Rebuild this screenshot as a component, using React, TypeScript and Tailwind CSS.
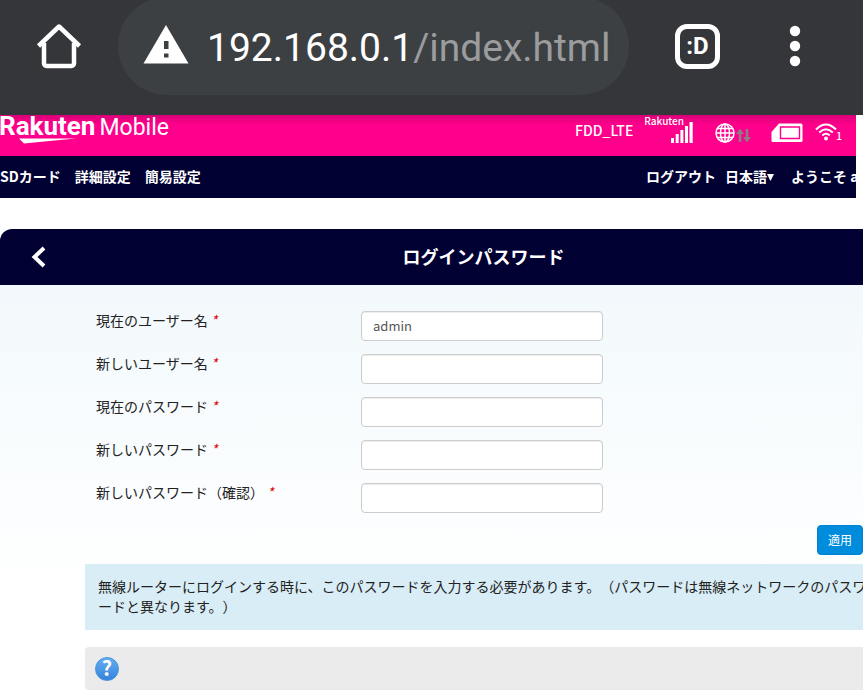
import { useState } from "react";

interface Field {
  id: string;
  label: string;
  type: "text" | "password";
}

const FIELDS: Field[] = [
  { id: "current-user", label: "現在のユーザー名", type: "text" },
  { id: "new-user", label: "新しいユーザー名", type: "text" },
  { id: "current-password", label: "現在のパスワード", type: "password" },
  { id: "new-password", label: "新しいパスワード", type: "password" },
  { id: "confirm-password", label: "新しいパスワード（確認）", type: "password" },
];

const NAV_ITEMS = ["SDカード", "詳細設定", "簡易設定"];

function HomeIcon() {
  return (
    <svg width="46" height="46" viewBox="0 0 46 46" fill="none" stroke="#fff" strokeWidth="4.500">
      <path d="M8 20v20.500a2.500 2.500 0 0 0 2.500 2.500h25a2.500 2.500 0 0 0 2.500-2.500V20" />
      <path d="M2.500 23 23 3.500 43.500 23" strokeLinejoin="round" />
    </svg>
  );
}

function WarningIcon() {
  return (
    <svg width="46" height="40" viewBox="0 0 46 40" className="mb-1 shrink-0">
      <path d="M23 1 45.500 39.500H.5Z" fill="#fff" />
      <path d="M21 17h4.500v8H21zM21 29.500h4.500v4H21z" fill="#3c4043" />
    </svg>
  );
}

function BrowserBar() {
  return (
    <div className="relative z-10 flex h-[115px] items-start overflow-hidden bg-[#35363a]">
      <button aria-label="Home" className="ml-9 mt-[23px] shrink-0">
        <HomeIcon />
      </button>
      <div className="-mt-[3px] ml-9 flex h-[98px] min-w-0 max-w-[511px] flex-1 items-center rounded-full bg-[#3c4043] pl-[25px] pr-3">
        <WarningIcon />
        <div className="ml-[18px] mt-1 min-w-0 flex-1 whitespace-nowrap font-[Roboto,sans-serif] text-[39px] leading-[48px] text-white">
          192.168.0.1<span className="text-[#9a9c9e]">/index.html</span>
        </div>
      </div>
      <button
        aria-label="Tabs"
        className="ml-[46px] mt-6 flex size-[45px] shrink-0 items-center justify-center rounded-[12px] border-[5px] border-white pb-0.5"
      >
        <span className="font-['Liberation_Sans_Narrow',Roboto,sans-serif] text-2xl font-bold leading-6 text-white">
          :D
        </span>
      </button>
      <button aria-label="Menu" className="ml-[69px] mt-[25px] shrink-0">
        <svg width="12" height="42" viewBox="0 0 12 42" fill="#fff">
          <circle cx="6" cy="6" r="5.200" />
          <circle cx="6" cy="21" r="5.200" />
          <circle cx="6" cy="36" r="5.200" />
        </svg>
      </button>
    </div>
  );
}

function Logo() {
  return (
    <div className="relative -mt-0.5 h-8 whitespace-nowrap font-[Roboto,sans-serif] leading-[26px]">
      <span className="-ml-px text-[26px] font-bold">Rakuten</span>
      <span className="ml-1 text-[23px]">Mobile</span>
      <svg width="58" height="6" viewBox="0 0 58 6" className="absolute left-[19px] top-[25px]">
        <path d="M0 .5H57Q30 3 5 5.500Z" fill="#fff" />
      </svg>
    </div>
  );
}

function SignalIcon() {
  return (
    <svg width="22" height="21" viewBox="0 0 22 21" fill="#fff">
      <path d="M0 16h3v5H0zM4.700 12h3v9h-3zM9.400 8h3v13h-3zM14 4h3v17h-3zM18.500 0h3.200v21h-3.200z" />
    </svg>
  );
}

function GlobeIcon() {
  return (
    <svg width="36" height="21" viewBox="0 0 36 21" fill="none" stroke="#fff" strokeWidth="1.500">
      <circle cx="10" cy="10" r="9" />
      <ellipse cx="10" cy="10" rx="4.500" ry="9" />
      <path d="M10 1v18M1 10h18M2.500 5.500h15M2.500 14.500h15" />
      <path d="M25 19V8M32 6v11" stroke="#8a7d84" strokeWidth="2.500" />
      <path d="m21 11 4-5.500 4 5.500ZM28 14l4 5.500 4-5.500Z" fill="#8a7d84" stroke="none" />
    </svg>
  );
}

function SimIcon() {
  return (
    <svg width="32" height="20" viewBox="0 0 32 20">
      <path d="M8 .5h22q1.500 0 1.500 1.500v15.500q0 1.500-1.500 1.500H2Q.5 19 .5 17.500V9Z" fill="#fff" />
      <path d="M9.500 4h19v11.500h-19z" fill="#fff" stroke="#ff008c" strokeWidth="1.400" />
    </svg>
  );
}

function WifiIcon() {
  return (
    <svg width="22" height="18" viewBox="0 0 22 18" fill="none" stroke="#fff" strokeWidth="2">
      <path d="M1 6.500Q11-3.500 21 6.500M4.200 9.500q6.800-6.500 13.600 0M7.300 12.500q3.700-3.500 7.400 0" />
      <circle cx="11" cy="15.500" r="2" fill="#fff" stroke="none" />
    </svg>
  );
}

function StatusHeader() {
  return (
    <header className="flex h-[41px] justify-between bg-[#ff008c] bg-linear-to-b from-black/15 to-transparent to-25% text-white">
      <Logo />
      <div className="flex items-start whitespace-nowrap pr-[14px]">
        <span className="mt-[5px] text-sm font-medium">FDD_LTE</span>
        <div className="ml-[11px] flex w-[49px] flex-col">
          <span className="h-[7px] text-[10px] font-medium leading-[11px]">Rakuten</span>
          <span className="self-end">
            <SignalIcon />
          </span>
        </div>
        <span className="ml-[22px] mt-2">
          <GlobeIcon />
        </span>
        <span className="ml-5 mt-2">
          <SimIcon />
        </span>
        <span className="ml-3 mt-2">
          <WifiIcon />
        </span>
        <span className="-ml-px mt-[15px] text-[10px] font-medium leading-3">1</span>
      </div>
    </header>
  );
}

function NavBar() {
  return (
    <nav className="flex h-[42px] items-center justify-between whitespace-nowrap bg-[#000033] pb-0.5 text-sm font-bold text-white">
      <div className="flex gap-[14px]">
        {NAV_ITEMS.map((item) => (
          <a key={item} href="#">
            {item}
          </a>
        ))}
      </div>
      <div className="flex w-[210px] overflow-hidden">
        <a href="#" className="shrink-0">
          ログアウト
        </a>
        <button className="ml-[9px] flex shrink-0 items-center">
          日本語
          <svg width="7" height="7" viewBox="0 0 7 7" fill="#fff" className="mt-0.5">
            <path d="M0 0h7L3.500 7Z" />
          </svg>
        </button>
        <span className="ml-[17px] shrink-0">ようこそ admin</span>
      </div>
    </nav>
  );
}

function HelpIcon() {
  return (
    <span className="flex size-6 items-center justify-center rounded-full border border-[#4a90d9] bg-linear-to-b from-[#62aef0] to-[#3583dc] pb-0.5 text-xl font-bold leading-none text-white">
      ?
    </span>
  );
}

export default function App() {
  const [values, setValues] = useState<Record<string, string>>({
    "current-user": "admin",
  });

  return (
    <div className="min-h-screen overflow-hidden bg-white font-['Noto_Sans_CJK_JP',sans-serif] text-[#222] [text-spacing-trim:space-all]">
      <BrowserBar />
      <div className="mr-[7px]">
        <StatusHeader />
        <NavBar />
      </div>

      {/* The router page keeps its desktop width and runs off the right edge. */}
      <main className="mt-[31px] min-w-[967px]">
        <div className="grid h-14 grid-cols-[80px_1fr_80px] items-center rounded-t-xl bg-[#000033] text-white">
          <button aria-label="戻る" className="ml-[31px] justify-self-start">
            <svg width="15" height="22" viewBox="0 0 15 22" fill="none" stroke="#fff" strokeWidth="4">
              <path d="m13 2-9.500 9 9.500 9" />
            </svg>
          </button>
          <h1 className="pb-0.5 text-center text-lg font-bold">ログインパスワード</h1>
        </div>

        <div className="bg-linear-to-b from-[#f2f9fc] to-white to-75% px-[85px] pt-[26px]">
          <form onSubmit={(e) => e.preventDefault()}>
            <div className="flex flex-col gap-[13px] pl-[11px]">
              {FIELDS.map((field) => (
                <div key={field.id} className="flex">
                  <label htmlFor={field.id} className="w-[265px] shrink-0 text-sm leading-[18px]">
                    {field.label}
                    <span className="ml-[3px] italic text-[#e00000]">*</span>
                  </label>
                  <input
                    id={field.id}
                    type={field.type}
                    value={values[field.id] ?? ""}
                    onChange={(e) => setValues({ ...values, [field.id]: e.target.value })}
                    className="h-[30px] w-[242px] rounded border border-[#ccc] bg-white px-[11px] pb-0.5 text-[13px] text-[#555] shadow-[inset_0_1px_1px_rgba(0,0,0,0.075)]"
                  />
                </div>
              ))}
            </div>
            <div className="mt-3 flex justify-end pr-[19px]">
              <button
                type="submit"
                className="h-[30px] rounded border border-[#0080d0] bg-[#008cdd] px-[10px] text-xs text-white"
              >
                適用
              </button>
            </div>
          </form>

          <p className="mt-[9px] bg-[#d9edf7] px-[13px] pb-[14px] pt-3 text-sm text-[#222]">
            無線ルーターにログインする時に、このパスワードを入力する必要があります。（パスワードは無線ネットワークのパスワードと異なります。）
          </p>

          <div className="mt-[17px] flex h-[43px] items-center rounded bg-[#ebebeb] px-[10px]">
            <button aria-label="ヘルプ">
              <HelpIcon />
            </button>
          </div>
        </div>
      </main>
    </div>
  );
}
